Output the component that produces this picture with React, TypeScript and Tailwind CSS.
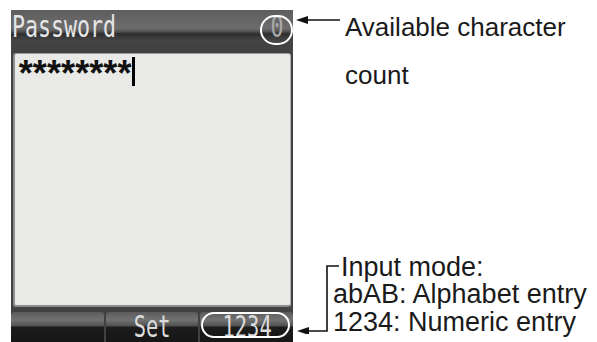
const mono = "font-['DejaVu_Sans_Mono',monospace]";
const sans = "font-['Liberation_Sans',Arial,sans-serif]";

function SoftKey({ label, circled }: { label?: string; circled?: boolean }) {
  return (
    <div className="relative flex-1 overflow-hidden rounded-t-[3px] bg-[linear-gradient(to_bottom,#5b5b5b_0px,#727272_8px,#4f4f4f_14px,#1c1c1c_15px,#161616_100%)]">
      {label && (
        <div
          className={`${mono} flex justify-center text-[30px] leading-[30px] text-[#dcdcdc]`}
        >
          <span className="inline-block scale-x-[0.68]">{label}</span>
        </div>
      )}
      {circled && (
        <div className="absolute left-[1px] top-0 h-[26px] w-[89px] rounded-full border-2 border-white" />
      )}
    </div>
  );
}

function Device() {
  return (
    <div className="relative flex h-[332px] w-[282px] flex-col bg-[#424242]">
      {/* title bar */}
      <div className="flex h-[32px] items-start justify-between bg-[linear-gradient(to_bottom,#5e5e5e_0px,#6c6c6c_18px,#595959_21px,#2c2c2c_24px,#3a3a3a_27px,#474747_100%)] pt-[2px]">
        <span
          className={`${mono} ml-[1px] inline-block origin-left scale-x-[0.72] text-[30px] leading-[30px] text-[#e6e6e6]`}
        >
          Password
        </span>
        <span
          className={`${mono} mr-[7px] inline-block scale-x-[0.72] text-[30px] leading-[30px] text-[#a9a9a9]`}
        >
          0
        </span>
      </div>
      <div className="absolute left-[249px] top-[5px] h-[30px] w-[33px] rounded-full border-2 border-white" />

      {/* text area */}
      <div className="mx-[2px] mt-[11px] h-[257px] rounded-[3px] border-l-2 border-t border-b-2 border-r border-l-[#8c8c8c] border-t-[#9a9a9a] border-b-[#8c8c8c] border-r-[#b0b0b0] bg-[#e9e9e7] pt-[3px]">
        <div className="flex h-[29px] items-start">
          <span className="font-['Liberation_Mono',monospace] translate-y-[6px] text-[36px] font-bold leading-[29px] tracking-[-7.5px] text-[#111]">
            ********
          </span>
          <span className="ml-[4px] h-[29px] w-[3px] shrink-0 bg-black" />
        </div>
      </div>

      {/* soft keys */}
      <div className="mt-[5px] flex flex-1 gap-[2px]">
        <SoftKey />
        <SoftKey label="Set" />
        <SoftKey label="1234" circled />
      </div>
    </div>
  );
}

export default function App() {
  return (
    <div className={`${sans} flex h-[342px] w-[597px] overflow-hidden bg-white pl-[11px] pt-[10px]`}>
      <Device />
      <div className="flex flex-1 flex-col">
        <div className="flex items-start">
          <svg width="52" height="40" viewBox="0 0 52 40" className="-mt-[10px] shrink-0">
            <line x1="10" y1="20" x2="47" y2="20" stroke="#111" strokeWidth="1.6" />
            <polygon points="3,20 15,16 15,24" fill="#111" />
          </svg>
          <p className="-mt-[7px] text-[26px] leading-[48px] text-[#1a1a1a]">
            Available character
            <br />
            count
          </p>
        </div>
        <div className="mb-[6px] mt-auto flex items-start">
          <svg width="46" height="80" viewBox="0 0 46 80" className="-mr-[6px] shrink-0">
            <polyline points="46,12 34,12 34,77 12,77" fill="none" stroke="#111" strokeWidth="1.6" />
            <polygon points="4,77 16,73 16,81" fill="#111" />
          </svg>
          <p className="text-[27px] leading-[27.5px] text-[#1a1a1a]">
            <span className="pl-[8px]">Input mode:</span>
            <br />
            abAB: Alphabet entry
            <br />
            1234: Numeric entry
          </p>
        </div>
      </div>
    </div>
  );
}
